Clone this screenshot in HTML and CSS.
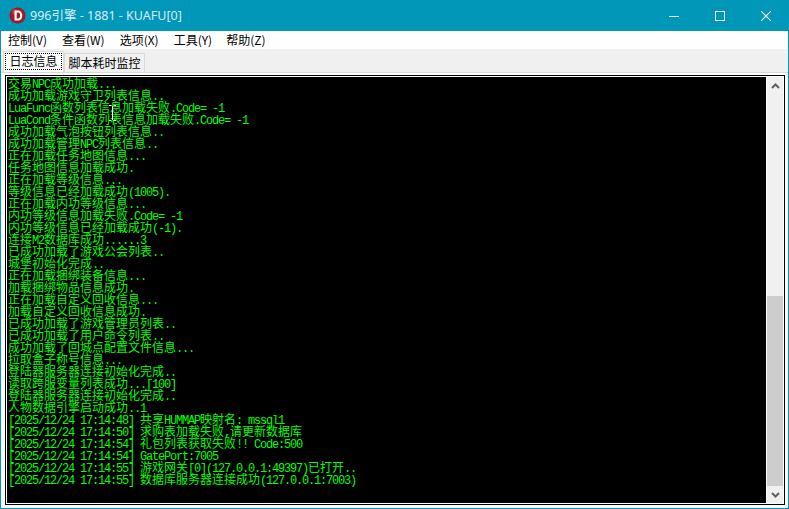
FILE: index.html
```html
<!DOCTYPE html>
<html lang="zh">
<head>
<meta charset="utf-8">
<title>996引擎 - 1881 - KUAFU[0]</title>
<link rel="stylesheet" href="styles.css">
</head>
<body>
<div class="window">
  <header class="titlebar">
    <svg class="app-icon" width="17" height="17" viewBox="0 0 17 17"><circle cx="8.5" cy="8.5" r="8" fill="#a5161f"/><circle cx="6" cy="5" r="3" fill="#d9444c" opacity=".6"/><path d="M5.5 3.5h3.6c2.6 0 4.2 2 4.2 5s-1.600 5-4.200 5H5.500zM7.700 5.500v6h1.300c1.300 0 2.100-1.100 2.100-3s-.8-3-2.100-3z" fill="#fff" fill-rule="evenodd"/></svg>
    <span class="title">996引擎 - 1881 - KUAFU[0]</span>
    <div class="controls">
      <span class="ctl"><svg width="10" height="10" viewBox="0 0 10 10"><path d="M0 5.500h10" stroke="#fff" fill="none"/></svg></span>
      <span class="ctl"><svg width="10" height="10" viewBox="0 0 10 10"><rect x=".5" y=".5" width="9" height="9" stroke="#fff" fill="none"/></svg></span>
      <span class="ctl"><svg width="10" height="10" viewBox="0 0 10 10"><path d="M0 0l10 10M10 0L0 10" stroke="#fff" stroke-width="1.100" fill="none"/></svg></span>
    </div>
  </header>
  <nav class="menubar">
    <span class="menu m1">控制(V)</span>
    <span class="menu m2">查看(W)</span>
    <span class="menu m3">选项(X)</span>
    <span class="menu m4">工具(Y)</span>
    <span class="menu m5">帮助(Z)</span>
  </nav>
  <div class="tabstrip">
    <div class="tab active"><span class="focus">日志信息</span></div>
    <div class="tab">脚本耗时监控</div>
  </div>
  <main class="pane">
    <div class="console">
      <div class="log">
        <div class="line">交易<i>NPC</i>成功加载<i>...</i></div>
        <div class="line">成功加载游戏守卫列表信息<i>..</i></div>
        <div class="line"><i>LuaFunc</i>函数列表信息加载失败<i>.Code= -1</i></div>
        <div class="line"><i>LuaCond</i>条件函数列表信息加载失败<i>.Code= -1</i></div>
        <div class="line">成功加载气泡按钮列表信息<i>..</i></div>
        <div class="line">成功加载管理<i>NPC</i>列表信息<i>..</i></div>
        <div class="line">正在加载任务地图信息<i>...</i></div>
        <div class="line">任务地图信息加载成功<i>.</i></div>
        <div class="line">正在加载等级信息<i>...</i></div>
        <div class="line">等级信息已经加载成功<i>(1005).</i></div>
        <div class="line">正在加载内功等级信息<i>...</i></div>
        <div class="line">内功等级信息加载失败<i>.Code= -1</i></div>
        <div class="line">内功等级信息已经加载成功<i>(-1).</i></div>
        <div class="line">连接<i>M2</i>数据库成功<i>......3</i></div>
        <div class="line">已成功加载了游戏公会列表<i>..</i></div>
        <div class="line">城堡初始化完成<i>..</i></div>
        <div class="line">正在加载捆绑装备信息<i>...</i></div>
        <div class="line">加载捆绑物品信息成功<i>.</i></div>
        <div class="line">正在加载自定义回收信息<i>...</i></div>
        <div class="line">加载自定义回收信息成功<i>.</i></div>
        <div class="line">已成功加载了游戏管理员列表<i>..</i></div>
        <div class="line">已成功加载了用户命令列表<i>..</i></div>
        <div class="line">成功加载了回城点配置文件信息<i>...</i></div>
        <div class="line">拉取盒子称号信息<i>...</i></div>
        <div class="line">登陆器服务器连接初始化完成<i>..</i></div>
        <div class="line">读取跨服变量列表成功<i>...[100]</i></div>
        <div class="line">登陆器服务器连接初始化完成<i>..</i></div>
        <div class="line">人物数据引擎启动成功<i>..1</i></div>
        <div class="line"><i>[2025/12/24 17:14:48] </i>共享<i>HUMMAP</i>映射名<i>: mssql1</i></div>
        <div class="line"><i>[2025/12/24 17:14:50] </i>求购表加载失败<i>,</i>请更新数据库</div>
        <div class="line"><i>[2025/12/24 17:14:54] </i>礼包列表获取失败<i>!! Code:500</i></div>
        <div class="line"><i>[2025/12/24 17:14:54] GatePort:7005</i></div>
        <div class="line"><i>[2025/12/24 17:14:55] </i>游戏网关<i>[0](127.0.0.1:49397)</i>已打开<i>..</i></div>
        <div class="line"><i>[2025/12/24 17:14:55] </i>数据库服务器连接成功<i>(127.0.0.1:7003)</i></div>
      </div>
      <div class="scrollbar">
        <div class="arrow"><svg width="9" height="6" viewBox="0 0 9 6"><path d="M1 5l3.500-3.500L8 5" stroke="#606060" stroke-width="2" fill="none"/></svg></div>
        <div class="track"><div class="thumb"></div></div>
        <div class="arrow"><svg width="9" height="6" viewBox="0 0 9 6"><path d="M1 1l3.500 3.500L8 1" stroke="#606060" stroke-width="2" fill="none"/></svg></div>
      </div>
      <svg class="ibeam" width="7" height="16" viewBox="0 0 7 16"><path d="M0 .5h2.500M4.500 .5H7M3.500 1v14M0 15.500h2.500M4.500 15.500H7" stroke="#fff" fill="none"/></svg>
    </div>
  </main>
</div>
</body>
</html>
```
FILE: styles.css
```css
* { box-sizing: border-box; }
html, body { margin: 0; padding: 0; }
body { width: 789px; height: 509px; overflow: hidden; background: #fff; }
.window {
  width: 789px; height: 509px;
  display: flex; flex-direction: column;
  border: 1px solid #0097b9; border-top: 0;
  font-family: "Noto Sans CJK SC", "Noto Sans", sans-serif;
  color: #000;
}
.titlebar {
  height: 31px; flex: none;
  margin: 0 -1px;
  background: #0097b9;
  display: flex; align-items: center;
  padding-left: 9px;
}
.app-icon { flex: none; margin-right: 4px; }
.title { font: 12.5px/31px "Noto Sans", "Noto Sans CJK SC", sans-serif; color: #d7edf3; }
.controls { margin-left: auto; display: flex; }
.ctl { width: 46px; height: 31px; display: flex; align-items: center; justify-content: center; }
.menubar {
  height: 18px; flex: none; background: #fff;
  display: flex; padding-left: 7px;
  font-size: 12px; line-height: 18px;
}
.menu { white-space: nowrap; }
.m1 { margin-right: 15px; }
.m2 { margin-right: 15px; }
.m3 { margin-right: 15px; }
.m4 { margin-right: 14px; }
.tabstrip {
  height: 23px; flex: none; background: #f0f0f0;
  display: flex; align-items: flex-end;
  padding-left: 2px;
  font-size: 12px;
}
.tab {
  height: 19px; line-height: 18px;
  padding: 0 3px;
  border: 1px solid #d9d9d9; border-bottom: 0;
  background: #f0f0f0;
  width: 81px; text-align: center;
}
.tab.active {
  height: 21px; width: 61px;
  background: #fff; padding: 1px 1px 0;
}
.focus { display: block; height: 17px; border: 1px dotted #000; line-height: 14px; font-size: 12px; }
.pane {
  flex: 1; min-height: 0;
  background: #fff;
  border-top: 1px solid #d9d9d9;
  padding: 2px 3px 3px 4px;
}
.console {
  position: relative;
  height: 100%;
  border: 1px solid #000;
  padding: 1px 0 1px 1px;
  display: flex;
  background: #fff;
}
.log {
  flex: 1; min-width: 0;
  background: #000; color: #00ff00;
  margin-right: 1px;
  padding: 0 0 0 1px;
  font: 12px/12px "Noto Sans CJK SC", sans-serif;
}
.line { height: 12px; white-space: pre; }
.line i { font: 12px/12px "Liberation Mono", monospace; letter-spacing: -1.2px; }
.scrollbar { width: 16px; flex: none; background: #f0f0f0; display: flex; flex-direction: column; margin-right: 1px; }
.arrow { height: 17px; flex: none; display: flex; align-items: center; justify-content: center; }
.track { flex: 1; min-height: 0; display: flex; flex-direction: column; justify-content: flex-end; }
.thumb { height: 190px; background: #cdcdcd; }
.ibeam { position: absolute; left: 103px; top: 29px; }
```
